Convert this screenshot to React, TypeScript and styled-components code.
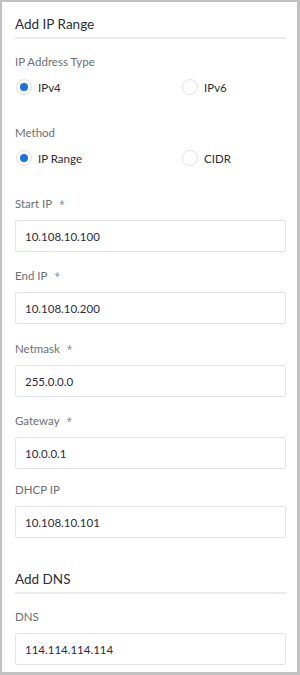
import React from "react";
import styled, { createGlobalStyle } from "styled-components";

const GlobalStyle = createGlobalStyle`
  html, body {
    margin: 0;
    padding: 0;
    background-color: #c2c2c2;
  }
  * {
    box-sizing: border-box;
  }
`;

const Panel = styled.div`
  width: 295px;
  height: 670px;
  margin: 2px 0 0 2px;
  padding: 0 11px 0 13px;
  background-color: #ffffff;
  font-family: "Segoe UI", Lato, "Open Sans", sans-serif;
  overflow: hidden;
`;

const SectionTitle = styled.div<{ $top: number }>`
  margin-top: ${(p) => p.$top}px;
  padding-bottom: 3px;
  line-height: 20px;
  font-size: 13.5px;
  color: #2b2f36;
  border-bottom: 2px solid #e8ebf0;
`;

const Label = styled.div<{ $top: number }>`
  margin-top: ${(p) => p.$top}px;
  line-height: 16px;
  font-size: 11.5px;
  color: #6b6f76;
  display: flex;
  align-items: center;
`;

const Required = styled.span`
  margin-left: 7px;
  font-family: "Open Sans", sans-serif;
  font-size: 10px;
  color: #7b8aa3;
`;

const RadioRow = styled.div`
  margin-top: 7px;
  display: grid;
  grid-template-columns: 166px 1fr;
  height: 20px;
`;

const RadioOption = styled.label`
  display: flex;
  align-items: center;
  gap: 6px;
  font-size: 11.5px;
  color: #2b2f36;
  padding-left: 1px;
`;

const RadioCircle = styled.span<{ $checked?: boolean }>`
  width: 16px;
  height: 16px;
  border-radius: 50%;
  border: 1px solid #dfe2e7;
  background: #ffffff;
  display: flex;
  align-items: center;
  justify-content: center;
  &::after {
    content: "";
    display: ${(p) => (p.$checked ? "block" : "none")};
    width: 8px;
    height: 8px;
    border-radius: 50%;
    background: #1a74e0;
  }
`;

const Input = styled.div`
  margin-top: 8px;
  height: 32px;
  border: 1px solid #e1e4e9;
  border-radius: 2px;
  padding: 0 9px;
  display: flex;
  align-items: center;
  font-size: 11.5px;
  color: #2e2b3d;
`;

const Radio = ({ label, checked }: { label: string; checked?: boolean }) => (
  <RadioOption>
    <RadioCircle $checked={checked} />
    {label}
  </RadioOption>
);

const Field = ({
  label,
  value,
  required,
  top = 16,
}: {
  label: string;
  value: string;
  required?: boolean;
  top?: number;
}) => (
  <>
    <Label $top={top}>
      {label}
      {required && <Required>*</Required>}
    </Label>
    <Input>{value}</Input>
  </>
);

const App = () => (
  <>
    <GlobalStyle />
    <Panel>
      <SectionTitle $top={12}>Add IP Range</SectionTitle>

      <Label $top={15}>IP Address Type</Label>
      <RadioRow>
        <Radio label="IPv4" checked />
        <Radio label="IPv6" />
      </RadioRow>

      <Label $top={28}>Method</Label>
      <RadioRow>
        <Radio label="IP Range" checked />
        <Radio label="CIDR" />
      </RadioRow>

      <Field label="Start IP" value="10.108.10.100" required top={28} />
      <Field label="End IP" value="10.108.10.200" required />
      <Field label="Netmask" value="255.0.0.0" required top={17} />
      <Field label="Gateway" value="10.0.0.1" required />
      <Field label="DHCP IP" value="10.108.10.101" top={13} />

      <SectionTitle $top={31}>Add DNS</SectionTitle>
      <Field label="DNS" value="114.114.114.114" top={15} />
    </Panel>
  </>
);

export default App;
